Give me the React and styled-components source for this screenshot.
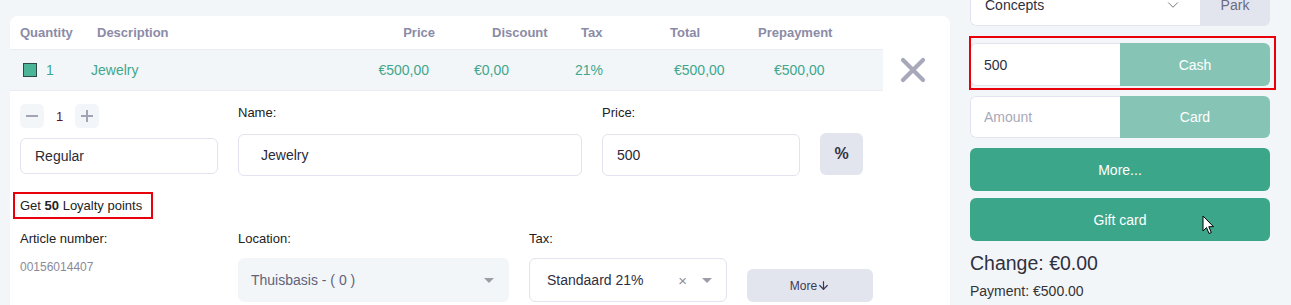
import React from 'react';
import styled, {createGlobalStyle} from 'styled-components';
import {ChevronDown, ArrowDown} from 'lucide-react';

const GlobalStyle = createGlobalStyle`
  html, body {
    margin: 0;
    padding: 0;
    height: 100%;
    overflow: hidden;
  }
  body {
    background: #f3f6f9;
    font-family: "Liberation Sans", Arial, sans-serif;
    color: #333;
  }
`;

const App = () => (
    <React.Fragment>
        <GlobalStyle/>
        <Page>
            <Card>
                <TableWrap>
                    <Table>
                        <HeaderRow>
                            <Cell $w={77}>Quantity</Cell>
                            <Cell $w={278}>Description</Cell>
                            <Cell $w={60} $align="right">Price</Cell>
                            <Cell $w={146} $pl={57}>Discount</Cell>
                            <Cell $w={89}>Tax</Cell>
                            <Cell $w={88}>Total</Cell>
                            <Cell>Prepayment</Cell>
                        </HeaderRow>
                        <ItemRow>
                            <Cell $w={68}>
                                <ColorSquare/>
                                1
                            </Cell>
                            <Cell $w={278}>Jewelry</Cell>
                            <Cell $w={60} $align="right">€500,00</Cell>
                            <Cell $w={146} $pl={45}>€0,00</Cell>
                            <Cell $w={99}>21%</Cell>
                            <Cell $w={100}>€500,00</Cell>
                            <Cell>€500,00</Cell>
                        </ItemRow>
                    </Table>
                    <CloseBox>
                        <svg width="26" height="26" viewBox="0 0 26 26">
                            <path d="M3 3 L23 23 M23 3 L3 23" stroke="#a8a8bb" strokeWidth="4.2" strokeLinecap="round"/>
                        </svg>
                    </CloseBox>
                </TableWrap>

                <Details>
                    <TopGrid>
                        <Field>
                            <QtyControl>
                                <QtyButton>
                                    <svg width="12" height="12" viewBox="0 0 12 12">
                                        <path d="M0 6 H12" stroke="#a3a3b6" strokeWidth="2"/>
                                    </svg>
                                </QtyButton>
                                <QtyValue>1</QtyValue>
                                <QtyButton>
                                    <svg width="12" height="12" viewBox="0 0 12 12">
                                        <path d="M0 6 H12 M6 0 V12" stroke="#a3a3b6" strokeWidth="2"/>
                                    </svg>
                                </QtyButton>
                            </QtyControl>
                            <TextInput $h={36} $pl={14}>Regular</TextInput>
                        </Field>
                        <Field>
                            <Label>Name:</Label>
                            <TextInput $pl={22}>Jewelry</TextInput>
                        </Field>
                        <Field>
                            <Label>Price:</Label>
                            <TextInput $pl={14}>500</TextInput>
                        </Field>
                        <PercentButton>%</PercentButton>
                    </TopGrid>

                    <Loyalty>
                        Get <b>50</b> Loyalty points
                    </Loyalty>

                    <BottomGrid>
                        <Field>
                            <Label $mb={10}>Article number:</Label>
                            <ArticleNumber>00156014407</ArticleNumber>
                        </Field>
                        <Field>
                            <Label $mb={10}>Location:</Label>
                            <Select $disabled>
                                <span>Thuisbasis - ( 0 )</span>
                                <Caret/>
                            </Select>
                        </Field>
                        <Field>
                            <Label $mb={10}>Tax:</Label>
                            <Select>
                                <span>Standaard 21%</span>
                                <SelectIcons>
                                    <Clear>×</Clear>
                                    <Caret/>
                                </SelectIcons>
                            </Select>
                        </Field>
                        <MoreToggle>
                            More
                            <ArrowDown size={13} strokeWidth={2.2}/>
                        </MoreToggle>
                    </BottomGrid>
                </Details>
            </Card>

            <Side>
                <ConceptRow>
                    <ConceptSelect>
                        Concepts
                        <ChevronDown size={18} strokeWidth={1.3} color="#777"/>
                    </ConceptSelect>
                    <ParkButton>Park</ParkButton>
                </ConceptRow>

                <Highlighted>
                    <PayRow>
                        <AmountInput>500</AmountInput>
                        <PayButton>Cash</PayButton>
                    </PayRow>
                    <HighlightFrame/>
                </Highlighted>

                <PayRow $h={42}>
                    <AmountInput $placeholder>Amount</AmountInput>
                    <PayButton>Card</PayButton>
                </PayRow>

                <ActionButton>More...</ActionButton>
                <ActionButton $gap={7}>
                    Gift card
                    <Cursor width="13" height="20" viewBox="0 0 13 20">
                        <path d="M1 1 L1 16 L4.5 12.5 L7 18.5 L9.3 17.5 L6.8 11.7 L11.5 11.7 Z"
                              fill="#fff" stroke="#000" strokeWidth="1" strokeLinejoin="miter"/>
                    </Cursor>
                </ActionButton>

                <Change>Change: €0.00</Change>
                <Payment>Payment: €500.00</Payment>
            </Side>
        </Page>
    </React.Fragment>
);

const Page = styled.div`
    display: flex;
    align-items: flex-start;
    gap: 20px;
    padding-left: 10px;
`;

const Card = styled.div`
    width: 940px;
    height: 330px;
    margin-top: 16px;
    background: #fff;
    border-radius: 8px;
`;

const TableWrap = styled.div`
    display: flex;
`;

const Table = styled.div`
    width: 873px;
`;

const HeaderRow = styled.div`
    display: flex;
    align-items: center;
    height: 33px;
    padding-left: 10px;
    border-bottom: 1px solid #e9edf2;
    font-size: 13px;
    font-weight: bold;
    color: #8b8ba7;
`;

const ItemRow = styled.div`
    display: flex;
    align-items: center;
    height: 40px;
    padding-left: 13px;
    background: #f3f6f9;
    border-bottom: 1px solid #e9edf2;
    font-size: 14px;
    color: #3fa68d;
`;

const Cell = styled.div`
    display: flex;
    align-items: center;
    justify-content: ${p => p.$align === 'right' ? 'flex-end' : 'flex-start'};
    width: ${p => p.$w ? `${p.$w}px` : 'auto'};
    flex: ${p => p.$w ? 'none' : '1'};
    padding-left: ${p => p.$pl || 0}px;
    box-sizing: border-box;
    white-space: nowrap;
`;

const ColorSquare = styled.span`
    width: 14px;
    height: 14px;
    box-sizing: border-box;
    background: #4bb597;
    border: 1px solid #2b4c45;
    margin-right: 9px;
`;

const CloseBox = styled.div`
    display: flex;
    align-items: center;
    justify-content: center;
    width: 60px;
    height: 40px;
    margin-top: 34px;
`;

const Details = styled.div`
    padding: 13px 10px 0 10px;
`;

const TopGrid = styled.div`
    display: grid;
    grid-template-columns: 198px 344px 198px 43px;
    column-gap: 20px;
    align-items: start;
`;

const Field = styled.div`
    display: flex;
    flex-direction: column;
`;

const QtyControl = styled.div`
    display: flex;
    align-items: center;
    height: 24px;
    margin-bottom: 10px;
`;

const QtyButton = styled.div`
    display: flex;
    align-items: center;
    justify-content: center;
    width: 24px;
    height: 24px;
    border-radius: 5px;
    background: #f3f6f9;
`;

const QtyValue = styled.span`
    width: 31px;
    text-align: center;
    font-size: 13px;
    color: #5e1030;
`;

const Label = styled.div`
    height: 18px;
    line-height: 18px;
    margin-bottom: ${p => p.$mb || 12}px;
    font-size: 13px;
    color: #222;
`;

const TextInput = styled.div`
    display: flex;
    align-items: center;
    height: ${p => p.$h || 42}px;
    padding-left: ${p => p.$pl}px;
    box-sizing: border-box;
    border: 1px solid #e3e3ef;
    border-radius: 6px;
    font-size: 14px;
    color: #2a2a3a;
`;

const PercentButton = styled.div`
    display: flex;
    align-items: center;
    justify-content: center;
    height: 42px;
    margin-top: 29px;
    border-radius: 6px;
    background: #e3e5ee;
    font-size: 16px;
    font-weight: bold;
    color: #333345;
`;

const Loyalty = styled.div`
    display: inline-block;
    margin: 16px 0 0 -7px;
    padding: 4px 9px 4px 5px;
    border: 2px solid #e8000b;
    line-height: 15px;
    font-size: 13px;
    color: #222;

    b {
        font-weight: bold;
    }
`;

const BottomGrid = styled.div`
    display: grid;
    grid-template-columns: 198px 271px 198px 126px;
    column-gap: 20px;
    align-items: end;
    margin-top: 11px;
`;

const ArticleNumber = styled.div`
    height: 44px;
    line-height: 18px;
    font-size: 12px;
    color: #8a8a98;
`;

const Select = styled.div`
    display: flex;
    align-items: center;
    justify-content: space-between;
    height: 44px;
    box-sizing: border-box;
    padding: 0 14px 0 ${p => p.$disabled ? 12 : 17}px;
    border: 1px solid ${p => p.$disabled ? '#f3f6f9' : '#e3e3ef'};
    border-radius: 6px;
    background: ${p => p.$disabled ? '#f3f6f9' : '#fff'};
    font-size: 14px;
    color: ${p => p.$disabled ? '#62627a' : '#2f2f3f'};
`;

const SelectIcons = styled.div`
    display: flex;
    align-items: center;
    gap: 15px;
`;

const Clear = styled.span`
    font-size: 15px;
    color: #8e8e9a;
`;

const Caret = styled.span`
    width: 0;
    height: 0;
    border-left: 5px solid transparent;
    border-right: 5px solid transparent;
    border-top: 5px solid #9d9da8;
`;

const MoreToggle = styled.div`
    display: flex;
    align-items: center;
    justify-content: center;
    height: 33px;
    border-radius: 6px;
    background: #e3e5ee;
    font-size: 12px;
    color: #3a3a5a;
`;

const Side = styled.div`
    width: 300px;
    margin-top: -16px;
    display: flex;
    flex-direction: column;
`;

const ConceptRow = styled.div`
    display: flex;
    height: 42px;
    border-radius: 0 0 6px 6px;
    overflow: hidden;
`;

const ConceptSelect = styled.div`
    display: flex;
    align-items: center;
    justify-content: space-between;
    width: 230px;
    box-sizing: border-box;
    padding: 0 18px 0 14px;
    background: #fff;
    border: 1px solid #e3e3ef;
    border-right: none;
    border-radius: 0 0 0 6px;
    font-size: 14px;
    color: #2f2f3f;
`;

const ParkButton = styled.div`
    display: flex;
    align-items: center;
    justify-content: center;
    flex: 1;
    background: #e3e5ee;
    font-size: 14px;
    color: #6b6b82;
`;

const Highlighted = styled.div`
    position: relative;
    margin-top: 17px;
`;

const HighlightFrame = styled.div`
    position: absolute;
    top: -7px;
    left: -1px;
    right: -6px;
    bottom: -4px;
    border: 2px solid #e8000b;
    pointer-events: none;
`;

const PayRow = styled.div`
    display: flex;
    height: ${p => p.$h || 43}px;
    border-radius: 6px;
    overflow: hidden;
    ${Highlighted} + & {
        margin-top: 10px;
    }
`;

const AmountInput = styled.div`
    display: flex;
    align-items: center;
    width: 150px;
    box-sizing: border-box;
    padding-left: 13px;
    background: #fff;
    border: 1px solid #e3e3ef;
    border-right: none;
    border-radius: 6px 0 0 6px;
    font-size: 14px;
    color: ${p => p.$placeholder ? '#a9a9b8' : '#2f2f3f'};
`;

const PayButton = styled.div`
    display: flex;
    align-items: center;
    justify-content: center;
    flex: 1;
    background: #86c5b6;
    font-size: 14px;
    color: #fff;
`;

const ActionButton = styled.div`
    position: relative;
    display: flex;
    align-items: center;
    justify-content: center;
    height: 43px;
    margin-top: ${p => p.$gap || 10}px;
    border-radius: 6px;
    background: #3ca68a;
    font-size: 14px;
    color: #fff;
`;

const Cursor = styled.svg`
    position: absolute;
    left: 232px;
    top: 17px;
`;

const Change = styled.div`
    margin-top: 11px;
    line-height: 22px;
    font-size: 19.5px;
    color: #30303f;
`;

const Payment = styled.div`
    margin-top: 8px;
    line-height: 18px;
    font-size: 14px;
    color: #333;
`;

export default App;
